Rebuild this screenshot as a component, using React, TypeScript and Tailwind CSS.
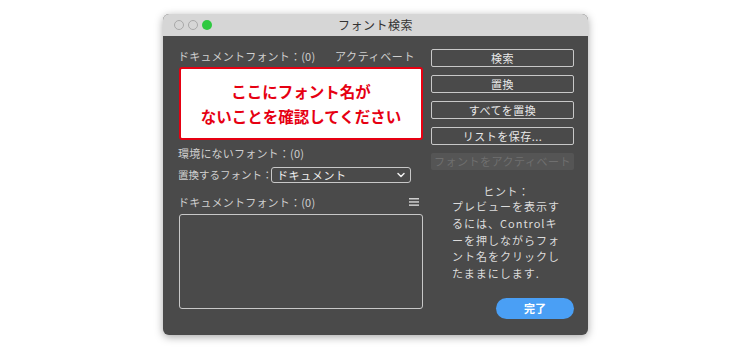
import { ChevronDown } from "lucide-react";

const FONT = "font-['Noto_Sans_CJK_JP','Noto_Sans',sans-serif]";

function DialogButton({ label, disabled = false }: { label: string; disabled?: boolean }) {
  if (disabled) {
    return (
      <div className="flex h-[17px] items-center justify-center rounded-[2px] bg-[#555555] text-[11px] tracking-[0.5px] text-[#6f6f6f]">
        {label}
      </div>
    );
  }
  return (
    <div className="flex h-[18px] items-center justify-center rounded-[2px] border border-[#c8c8c8] text-[11px] tracking-[0.5px] text-[#e8e8e8]">
      {label}
    </div>
  );
}

function TrafficLights() {
  return (
    <div className="flex items-center gap-[4px]">
      <span className="h-[10px] w-[10px] rounded-full border border-[#a8a8a8]" />
      <span className="h-[10px] w-[10px] rounded-full border border-[#a8a8a8]" />
      <span className="h-[10px] w-[10px] rounded-full bg-[#2fc940]" />
    </div>
  );
}

export default function App() {
  return (
    <div className={`h-[350px] w-[750px] bg-white pl-[163px] pt-[14px] ${FONT}`}>
      <div className="flex h-[321px] w-[425px] flex-col overflow-hidden rounded-[6px] bg-[#4a4a4a] shadow-[0_2px_8px_rgba(0,0,0,0.35)]">
        {/* title bar */}
        <div className="relative flex h-[22px] items-center justify-center bg-[#d6d6d6]">
          <div className="absolute left-[11px] top-[6px]">
            <TrafficLights />
          </div>
          <span className="text-[12px] tracking-[0.5px] text-[#333333]">フォント検索</span>
        </div>

        <div className="flex gap-[8px] pl-[15px] pr-[14px] pt-[13px]">
          {/* left column */}
          <div className="flex w-[245px] flex-col text-[11px] text-[#cfcfcf]">
            <div className="flex h-[14px] items-center justify-between pr-[8px]">
              <span className="tracking-[0.2px]">ドキュメントフォント：(0)</span>
              <span className="tracking-[0.6px]">アクティベート</span>
            </div>

            <div className="ml-[1px] mt-[4px] flex h-[73px] flex-col items-center justify-center rounded-[3px] border-2 border-[#e60012] bg-white text-[15.5px] font-bold leading-[25px] text-[#e60012]">
              <span>ここにフォント名が</span>
              <span>ないことを確認してください</span>
            </div>

            <div className="mt-[6px] h-[14px] leading-[14px] tracking-[0.2px]">環境にないフォント：(0)</div>

            <div className="mt-[7px] flex h-[16px] items-center">
              <span className="w-[93px] shrink-0 whitespace-nowrap text-[10.5px]">置換するフォント：</span>
              <div className="flex h-[16px] w-[140px] items-center justify-between rounded-[3px] border border-[#c8c8c8] pl-[5px] pr-[3px] text-[#f0f0f0]">
                <span className="tracking-[0.6px]">ドキュメント</span>
                <ChevronDown className="h-[12px] w-[12px]" strokeWidth={3} />
              </div>
            </div>

            <div className="mt-[12px] flex h-[14px] items-center justify-between pr-[4px]">
              <span className="tracking-[0.2px]">ドキュメントフォント：(0)</span>
              <svg width="10" height="8" viewBox="0 0 10 8">
                <rect x="0" y="0" width="10" height="1.5" fill="#cfcfcf" />
                <rect x="0" y="3.2" width="10" height="1.5" fill="#cfcfcf" />
                <rect x="0" y="6.4" width="10" height="1.5" fill="#cfcfcf" />
              </svg>
            </div>

            <div className="ml-[1px] mt-[5px] h-[95px] rounded-[3px] border border-[#c8c8c8]" />
          </div>

          {/* right column */}
          <div className="flex w-[143px] flex-col">
            <div className="flex flex-col gap-[8px]">
              <DialogButton label="検索" />
              <DialogButton label="置換" />
              <DialogButton label="すべてを置換" />
              <DialogButton label="リストを保存..." />
              <DialogButton label="フォントをアクティベート" disabled />
            </div>

            <div className="mt-[15px] h-[12px] pl-[8px] text-center text-[11px] leading-[12px] tracking-[0.6px] text-[#dcdcdc]">
              ヒント：
            </div>
            <div className="mt-[1px] pl-[21px] text-[11px] leading-[16.75px] tracking-[1px] text-[#dcdcdc]">
              <div>プレビューを表示す</div>
              <div>るには、Controlキ</div>
              <div>ーを押しながらフォ</div>
              <div>ント名をクリックし</div>
              <div>たままにします.</div>
            </div>

            <div className="mt-[16px] flex justify-end">
              <div className="flex h-[21px] w-[78px] items-center justify-center rounded-full bg-[#4a9ff5] text-[11px] font-bold text-white">
                完了
              </div>
            </div>
          </div>
        </div>
      </div>
    </div>
  );
}
